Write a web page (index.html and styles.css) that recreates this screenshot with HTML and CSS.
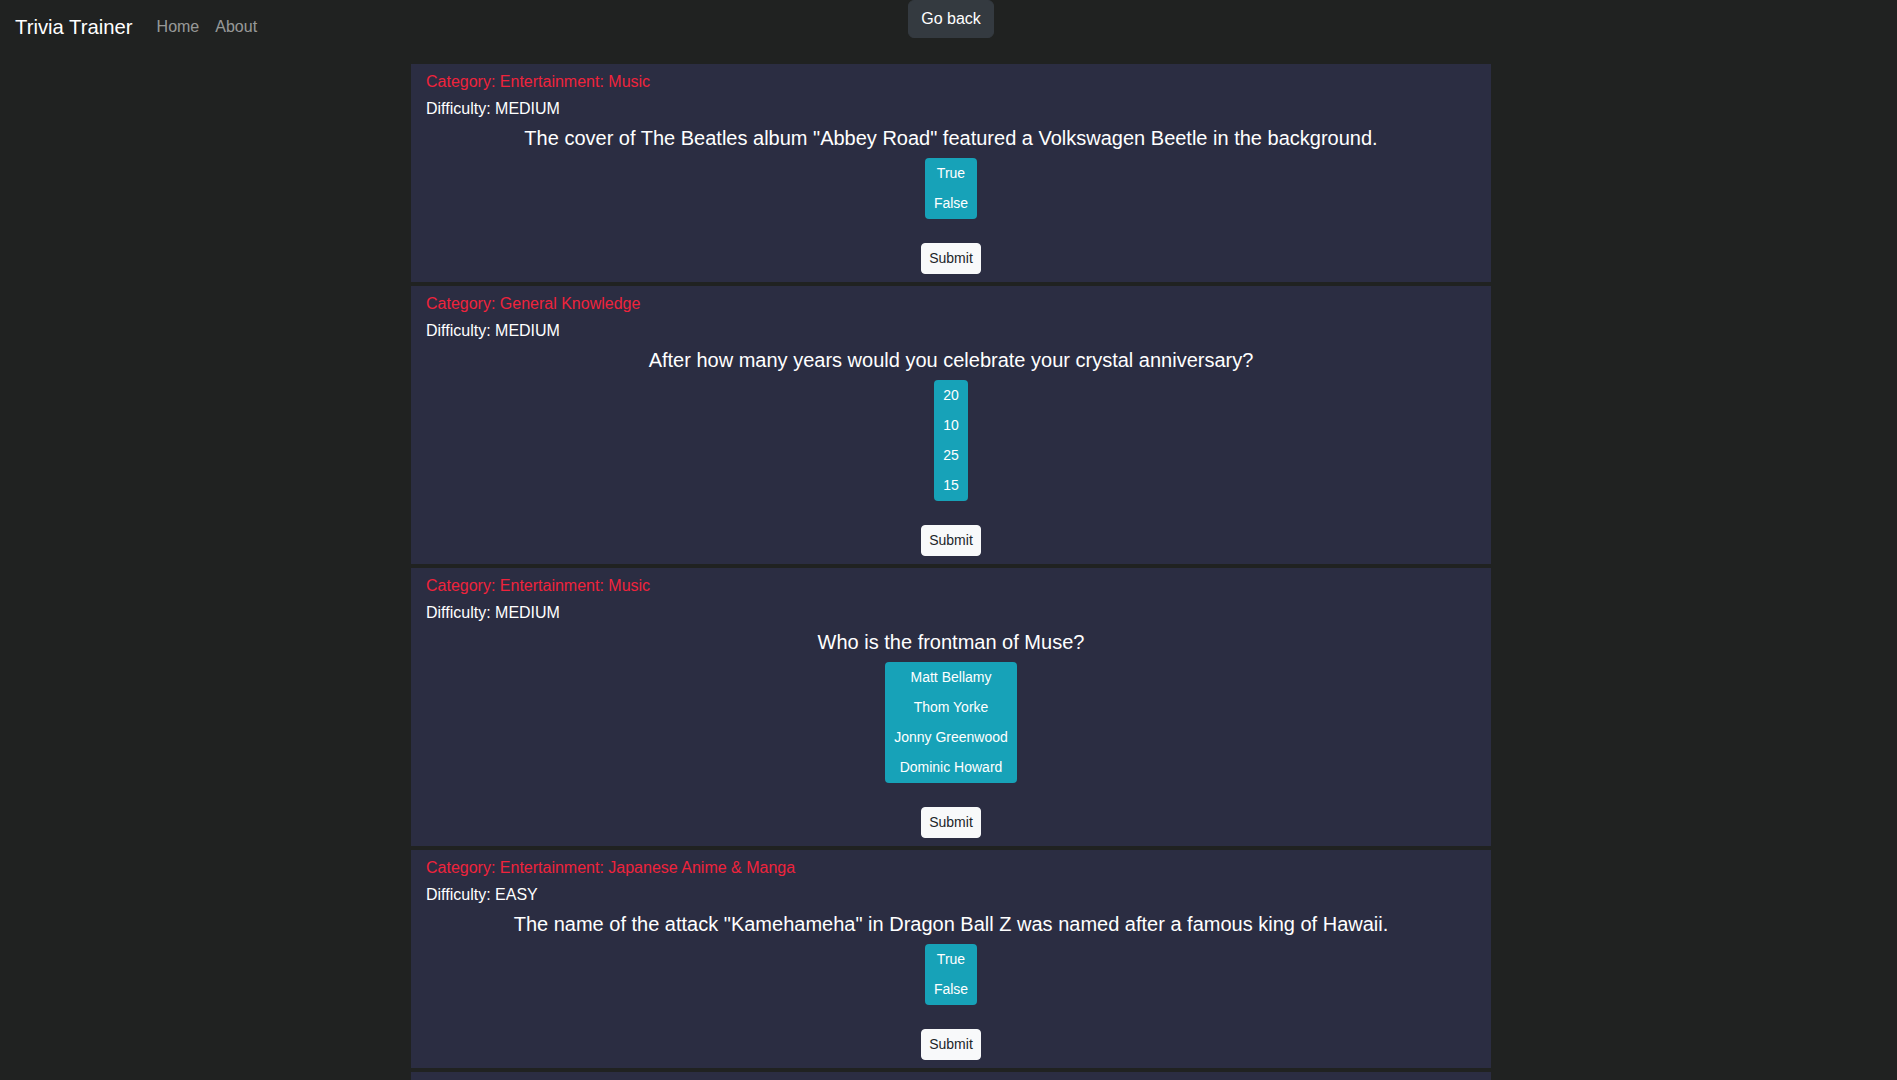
FILE: index.html
```html
<!DOCTYPE html>
<html lang="en">
<head>
<meta charset="utf-8">
<title>Trivia Trainer</title>
<link rel="stylesheet" href="styles.css">
</head>
<body>
<header class="topbar">
  <nav class="nav">
    <span class="brand">Trivia Trainer</span>
    <a class="nav-link" href="#">Home</a>
    <a class="nav-link" href="#">About</a>
  </nav>
  <button class="btn-back">Go back</button>
  <div></div>
</header>
<main class="quiz">
  <section class="card">
    <div class="category">Category: Entertainment: Music</div>
    <div class="difficulty">Difficulty: MEDIUM</div>
    <div class="question">The cover of The Beatles album "Abbey Road" featured a Volkswagen Beetle in the background.</div>
    <div class="options">
      <div class="option">True</div>
      <div class="option">False</div>
    </div>
    <button class="btn-submit">Submit</button>
  </section>
  <section class="card">
    <div class="category">Category: General Knowledge</div>
    <div class="difficulty">Difficulty: MEDIUM</div>
    <div class="question">After how many years would you celebrate your crystal anniversary?</div>
    <div class="options">
      <div class="option">20</div>
      <div class="option">10</div>
      <div class="option">25</div>
      <div class="option">15</div>
    </div>
    <button class="btn-submit">Submit</button>
  </section>
  <section class="card">
    <div class="category">Category: Entertainment: Music</div>
    <div class="difficulty">Difficulty: MEDIUM</div>
    <div class="question">Who is the frontman of Muse?</div>
    <div class="options">
      <div class="option">Matt Bellamy</div>
      <div class="option">Thom Yorke</div>
      <div class="option">Jonny Greenwood</div>
      <div class="option">Dominic Howard</div>
    </div>
    <button class="btn-submit">Submit</button>
  </section>
  <section class="card">
    <div class="category">Category: Entertainment: Japanese Anime &amp; Manga</div>
    <div class="difficulty">Difficulty: EASY</div>
    <div class="question">The name of the attack "Kamehameha" in Dragon Ball Z was named after a famous king of Hawaii.</div>
    <div class="options">
      <div class="option">True</div>
      <div class="option">False</div>
    </div>
    <button class="btn-submit">Submit</button>
  </section>
  <section class="card">
    <div class="category">Category: Science &amp; Nature</div>
    <div class="difficulty">Difficulty: EASY</div>
    <div class="question">The chemical symbol for gold is Au.</div>
    <div class="options">
      <div class="option">True</div>
      <div class="option">False</div>
    </div>
    <button class="btn-submit">Submit</button>
  </section>
</main>
</body>
</html>
```
FILE: styles.css
```css
* { box-sizing: border-box; }

html, body {
  background: #202221;
}

body {
  margin: 0;
  padding: 0 0 0 5px;
  font-family: "Liberation Sans", Arial, sans-serif;
  color: #ffffff;
}

.topbar {
  display: grid;
  grid-template-columns: 1fr auto 1fr;
  align-items: start;
  height: 64px;
}

.nav {
  display: flex;
  align-items: center;
  padding: 7px 0 0 10px;
  height: 40px;
  box-sizing: content-box;
}

.brand {
  font-size: 20.3px;
  line-height: 30px;
  color: #ffffff;
  margin-right: 16px;
}

.nav-link {
  font-size: 16px;
  line-height: 24px;
  color: rgba(255, 255, 255, 0.55);
  text-decoration: none;
  padding: 0 8px;
}

.btn-back {
  font-family: inherit;
  font-size: 16px;
  line-height: 24px;
  padding: 6px 12px;
  border: 1px solid #343a40;
  border-radius: 6px;
  background: #343a40;
  color: #ffffff;
  cursor: pointer;
}

.quiz {
  width: 1080px;
  margin: 0 auto;
  display: flex;
  flex-direction: column;
  gap: 4px;
}

.card {
  background: #2b2d42;
  padding: 6px 15px 8px;
  display: flex;
  flex-direction: column;
  align-items: stretch;
}

.category {
  color: #ef233c;
  font-size: 16px;
  line-height: 24px;
}

.difficulty {
  margin-top: 3px;
  font-size: 16px;
  line-height: 24px;
}

.question {
  margin-top: 2px;
  font-size: 20px;
  line-height: 30px;
  text-align: center;
}

.options {
  margin: 5px auto 0;
  background: #17a2b8;
  border-radius: 4px;
  padding: 0 0 1px;
  display: flex;
  flex-direction: column;
  align-items: stretch;
}

.option {
  font-size: 14px;
  line-height: 18px;
  padding: 6px 9px;
  text-align: center;
  color: #ffffff;
}

.btn-submit {
  align-self: center;
  margin-top: 24px;
  font-family: inherit;
  font-size: 14px;
  line-height: 21px;
  padding: 4px 7px;
  border: 1px solid #f8f9fa;
  border-radius: 4px;
  background: #f8f9fa;
  color: #212529;
  cursor: pointer;
}
```
